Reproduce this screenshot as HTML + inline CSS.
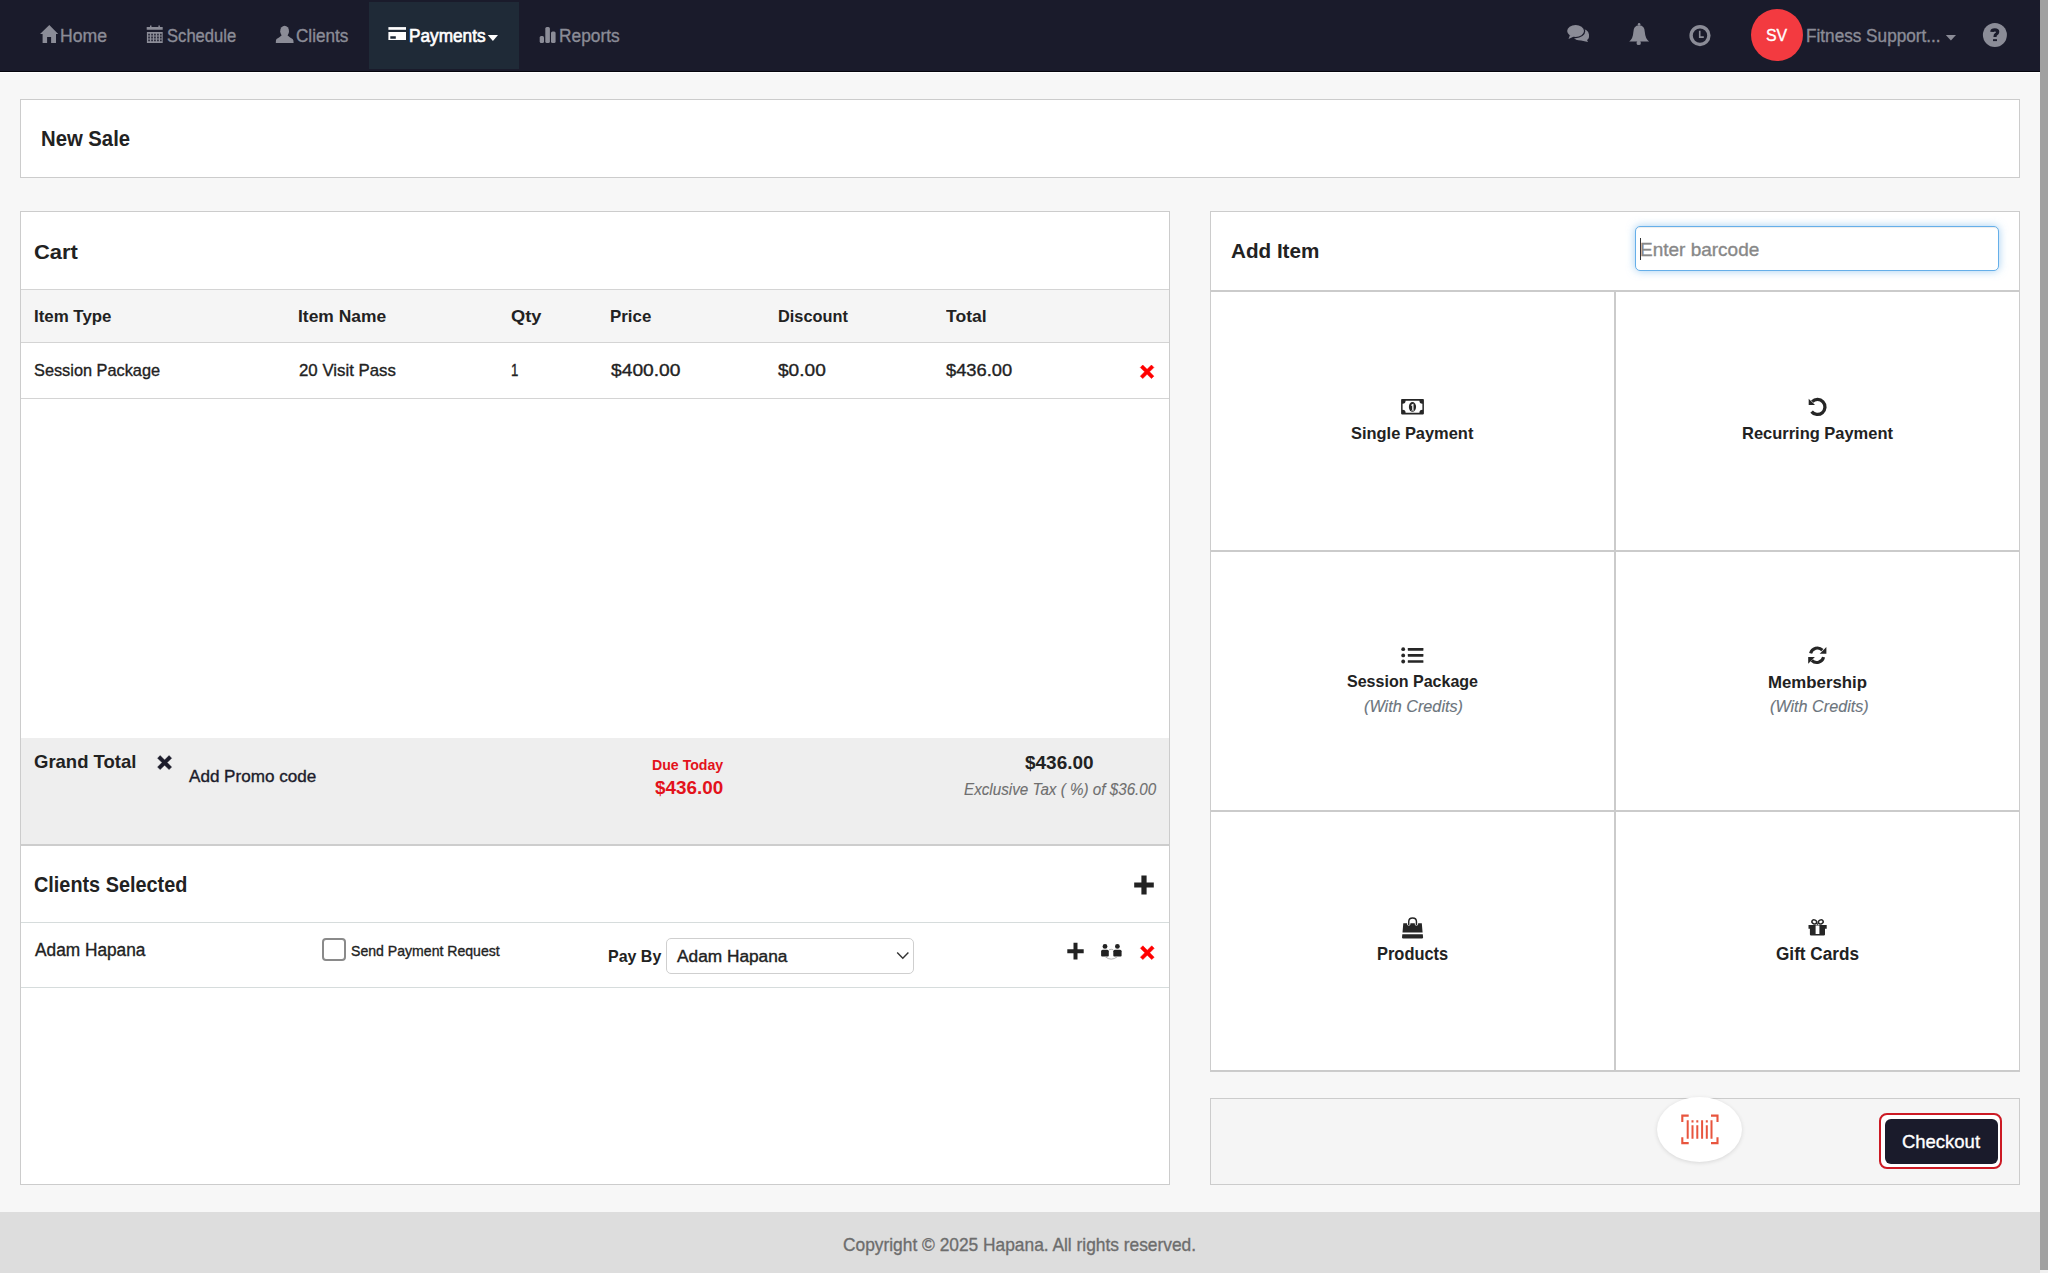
<!DOCTYPE html>
<html><head><meta charset="utf-8"><title>New Sale</title>
<style>
html,body{margin:0;padding:0;}
body{width:2048px;height:1273px;overflow:hidden;position:relative;background:#f7f7f7;font-family:"Liberation Sans",sans-serif;}
.b{position:absolute;}
.i{position:absolute;overflow:visible;}
.t{position:absolute;line-height:1;white-space:nowrap;transform-origin:0 0;}
</style></head><body>
<div class="b" style="left:0px;top:0px;width:2048px;height:71px;background:#1a1b2b;"></div>
<div class="b" style="left:0px;top:71px;width:2048px;height:1px;background:#05050d;"></div>
<div class="b" style="left:0px;top:72px;width:2048px;height:1px;background:#ffffff;"></div>
<div class="b" style="left:369px;top:2px;width:150px;height:67px;background:#1f2a37;"></div>
<svg class="i" style="left:40px;top:25px;" width="19" height="18" viewBox="0 0 19 18"><path fill="#8b8c97" d="M9.3 0 L18.2 9 L16 9 L16 18 L11.1 18 L11.1 12 L7.1 12 L7.1 18 L2.6 18 L2.6 9 L0 9 Z"/></svg>
<svg class="i" style="left:146px;top:25px;" width="17" height="18" viewBox="0 0 17 18"><path fill="#8b8c97" d="M0.7 2 H16.7 V4.8 H0.7 Z M4 0.5 h1.5 v2 h-1.5 Z M12.4 0.5 h1.5 v2 h-1.5 Z"/><path fill="#8b8c97" fill-rule="evenodd" d="M0.9 6.9 H16.7 V18 H0.9 Z M2.3 8.7 h1.5 v1.8 h-1.5 Z M5.3 8.7 h1.5 v1.8 h-1.5 Z M8.2 8.7 h1.5 v1.8 h-1.5 Z M11.2 8.7 h1.5 v1.8 h-1.5 Z M14.1 8.7 h1.5 v1.8 h-1.5 Z M2.3 11.6 h1.5 v1.8 h-1.5 Z M5.3 11.6 h1.5 v1.8 h-1.5 Z M8.2 11.6 h1.5 v1.8 h-1.5 Z M11.2 11.6 h1.5 v1.8 h-1.5 Z M14.1 11.6 h1.5 v1.8 h-1.5 Z M2.3 14.5 h1.5 v1.8 h-1.5 Z M5.3 14.5 h1.5 v1.8 h-1.5 Z M8.2 14.5 h1.5 v1.8 h-1.5 Z M11.2 14.5 h1.5 v1.8 h-1.5 Z M14.1 14.5 h1.5 v1.8 h-1.5 Z"/></svg>
<svg class="i" style="left:275px;top:25px;" width="19" height="19" viewBox="0 0 19 19"><ellipse fill="#8b8c97" cx="9.6" cy="6.3" rx="4.4" ry="5.6"/><path fill="#8b8c97" d="M6.5 10.5 Q4 12.5 1.5 14 Q0.7 14.8 0.8 18 L18.6 18 Q18.7 14.8 17.6 14 Q15 12.5 12.7 10.5 Z"/></svg>
<svg class="i" style="left:388px;top:26px;" width="19" height="15" viewBox="0 0 19 15"><path fill="#fff" d="M0.4 1.1 H18 V3.8 H0.4 Z"/><path fill="#fff" fill-rule="evenodd" d="M0.4 6 H18 V14 H0.4 Z M2.3 10.2 H7.8 V12.8 H2.3 Z"/></svg>
<svg class="i" style="left:487px;top:34px;" width="12" height="8" viewBox="0 0 12 8"><path fill="#fff" d="M0.8 1 L11 1 L5.9 7 Z"/></svg>
<svg class="i" style="left:539px;top:26px;" width="18" height="18" viewBox="0 0 18 18"><rect fill="#8b8c97" x="0.7" y="10" width="4.3" height="7" rx="1.5"/><rect fill="#8b8c97" x="6.3" y="1" width="4.6" height="16" rx="1.5"/><rect fill="#8b8c97" x="12" y="5.6" width="4.6" height="11.4" rx="1.5"/></svg>
<svg class="i" style="left:1566px;top:24px;" width="24" height="19" viewBox="0 0 24 19"><path fill="#8b8c97" d="M11 5 Q22 3.5 23 10.5 Q23.3 15 21 16 L22 18 L15 16.5 Q9 16.5 7.5 13 Z"/><ellipse fill="#1a1b2b" cx="9.5" cy="7" rx="9.8" ry="7.2"/><ellipse fill="#8b8c97" cx="9.6" cy="7.1" rx="8.4" ry="6"/><path fill="#8b8c97" d="M4 11 L2.5 15 L8 12.5 Z"/></svg>
<svg class="i" style="left:1624px;top:18px" width="30" height="30" viewBox="1624 18 30 30"><circle fill="#8b8c97" cx="1639.1" cy="24.3" r="1.3"/><path fill="#8b8c97" d="M1633.3 32.5 Q1633.3 25.4 1639.1 25.2 Q1644.9 25.4 1644.9 32.5 Q1645.2 38.3 1649.1 41.6 L1629.2 41.6 Q1633.1 38.3 1633.3 32.5 Z"/><circle fill="#8b8c97" cx="1638.7" cy="42.9" r="2.2"/></svg>
<svg class="i" style="left:1689px;top:25px;" width="22" height="22" viewBox="0 0 22 22"><circle fill="none" stroke="#8b8c97" stroke-width="3.4" cx="11" cy="10.6" r="8.9"/><path fill="none" stroke="#8b8c97" stroke-width="1.6" d="M10.7 5.8 V12.1 H14.8"/></svg>
<div class="b" style="left:1750.7px;top:9px;width:52px;height:52px;border-radius:50%;background:#f33a40;"></div>
<svg class="i" style="left:1945px;top:34px;" width="12" height="8" viewBox="0 0 12 8"><path fill="#8b8c97" d="M0.8 1 L11 1 L5.9 6.5 Z"/></svg>
<svg class="i" style="left:1978px;top:18px" width="34" height="34" viewBox="1978 18 34 34"><circle fill="#8b8c97" cx="1994.9" cy="35.1" r="12"/><path fill="none" stroke="#1a1b2b" stroke-width="3.2" d="M1991.8 31.8 Q1992 29.9 1994.8 29.9 Q1997.7 29.9 1997.7 32 Q1997.7 33.4 1996 34.3 Q1995 35 1995 37"/><rect fill="#1a1b2b" x="1993" y="39.2" width="4" height="1.9"/></svg>
<div class="b" style="left:20px;top:99px;width:2000px;height:79px;background:#fff;border:1px solid #cccccc;box-sizing:border-box;"></div>
<div class="b" style="left:20px;top:211px;width:1150px;height:974px;background:#fff;border:1px solid #cccccc;box-sizing:border-box;"></div>
<div class="b" style="left:21px;top:289px;width:1148px;height:54px;background:#f5f5f5;"></div>
<div class="b" style="left:21px;top:289px;width:1148px;height:1px;background:#d4d4d4;"></div>
<div class="b" style="left:21px;top:342px;width:1148px;height:1px;background:#d4d4d4;"></div>
<div class="b" style="left:21px;top:398px;width:1148px;height:1px;background:#d4d4d4;"></div>
<div class="b" style="left:21px;top:738px;width:1148px;height:106px;background:#eeeeee;"></div>
<div class="b" style="left:21px;top:844px;width:1148px;height:2px;background:#cdcdcd;"></div>
<div class="b" style="left:21px;top:922px;width:1148px;height:1px;background:#d6dcdc;"></div>
<div class="b" style="left:21px;top:987px;width:1148px;height:1px;background:#d6dcdc;"></div>
<svg class="i" style="left:1138px;top:363px" width="18" height="18" viewBox="1138 363 18 18"><polygon fill="#ff0000" stroke="#ff0000" stroke-width="0.5" stroke-linejoin="round" points="1140.30,367.47 1142.77,365.00 1147.10,369.33 1151.43,365.00 1153.90,367.47 1149.57,371.80 1153.90,376.13 1151.43,378.60 1147.10,374.27 1142.77,378.60 1140.30,376.13 1144.63,371.80"/></svg>
<svg class="i" style="left:155px;top:753px" width="19" height="19" viewBox="155 753 19 19"><polygon fill="#1c1c2b" stroke="#1c1c2b" stroke-width="0.5" stroke-linejoin="round" points="157.60,758.15 160.15,755.60 164.60,760.05 169.05,755.60 171.60,758.15 167.15,762.60 171.60,767.05 169.05,769.60 164.60,765.15 160.15,769.60 157.60,767.05 162.05,762.60"/></svg>
<svg class="i" style="left:1138px;top:943px" width="18" height="18" viewBox="1138 943 18 18"><polygon fill="#ff0000" stroke="#ff0000" stroke-width="0.5" stroke-linejoin="round" points="1140.40,948.27 1142.87,945.80 1147.30,950.23 1151.73,945.80 1154.20,948.27 1149.77,952.70 1154.20,957.13 1151.73,959.60 1147.30,955.17 1142.87,959.60 1140.40,957.13 1144.83,952.70"/></svg>
<svg class="i" style="left:1134px;top:875px;" width="20" height="20" viewBox="0 0 20 20"><path fill="#222" d="M7.4 0.5 H12.6 V7.4 H19.8 V12.6 H12.6 V19.6 H7.4 V12.6 H0.2 V7.4 H7.4 Z"/></svg>
<svg class="i" style="left:1067px;top:942px;" width="17" height="18" viewBox="0 0 17 18"><path fill="#222" d="M6.5 0.7 H10.5 V7.2 H16.7 V11.2 H10.5 V17.4 H6.5 V11.2 H0.3 V7.2 H6.5 Z"/></svg>
<svg class="i" style="left:1096px;top:938px" width="30" height="26" viewBox="1096 938 30 26"><circle fill="#222" cx="1105" cy="946.4" r="2.4"/><circle fill="#222" cx="1117.4" cy="946.4" r="2.4"/><path fill="#222" d="M1101.1 951.2 Q1101.1 949.7 1102.6 949.7 H1107.3 Q1108.8 949.7 1108.8 951.2 V955.6 Q1108.8 956.6 1107.8 956.6 H1102.1 Q1101.1 956.6 1101.1 955.6 Z"/><path fill="#222" d="M1113.3 951.2 Q1113.3 949.7 1114.8 949.7 H1120.1 Q1121.6 949.7 1121.6 951.2 V955.6 Q1121.6 956.6 1120.6 956.6 H1114.3 Q1113.3 956.6 1113.3 955.6 Z"/><path fill="none" stroke="#aaa" stroke-width="0.9" d="M1105.3 956.8 Q1111.2 961.5 1117.2 956.8 M1109 949.8 Q1111.2 948.7 1113.3 949.8"/></svg>
<div class="b" style="left:321.5px;top:937.5px;width:24px;height:23px;border:2px solid #8a8a8a;border-radius:4px;box-sizing:border-box;background:#fff;"></div>
<div class="b" style="left:665.5px;top:937.5px;width:248px;height:36px;border:1px solid #cfcfcf;border-radius:5px;box-sizing:border-box;background:#fff;"></div>
<svg class="i" style="left:896px;top:951px;" width="14" height="9" viewBox="0 0 14 9"><path fill="none" stroke="#333" stroke-width="1.4" d="M1.2 1.5 L6.8 7.3 L12.4 1.5"/></svg>
<div class="b" style="left:1210px;top:211px;width:810px;height:861px;background:#fff;border:1px solid #cccccc;box-sizing:border-box;"></div>
<div class="b" style="left:1211px;top:290px;width:808px;height:2px;background:#cbcbcb;"></div>
<div class="b" style="left:1211px;top:550px;width:808px;height:2px;background:#cbcbcb;"></div>
<div class="b" style="left:1211px;top:810px;width:808px;height:2px;background:#cbcbcb;"></div>
<div class="b" style="left:1614px;top:291px;width:2px;height:780px;background:#cbcbcb;"></div>
<div class="b" style="left:1211px;top:1070px;width:808px;height:1px;background:#cbcbcb;"></div>
<div class="b" style="left:1635px;top:226px;width:364px;height:45px;border:1px solid #66afe9;border-radius:5px;box-sizing:border-box;background:#fff;box-shadow:inset 0 1px 1px rgba(0,0,0,.075),0 0 8px rgba(102,175,233,.6);"></div>
<div class="b" style="left:1640px;top:238px;width:1px;height:22px;background:#333;"></div>
<svg class="i" style="left:1396px;top:394px" width="34" height="26" viewBox="1396 394 34 26"><path fill="#262626" fill-rule="evenodd" d="M1401.9 399.1 H1423.1 Q1423.9 399.1 1423.9 399.9 V413.6 Q1423.9 414.4 1423.1 414.4 H1401.9 Q1401.1 414.4 1401.1 413.6 V399.9 Q1401.1 399.1 1401.9 399.1 Z M1405.6 400.7 H1419.4 A3 3 0 0 0 1422.4 403.7 V409.8 A3 3 0 0 0 1419.4 412.8 H1405.6 A3 3 0 0 0 1402.6 409.8 V403.7 A3 3 0 0 0 1405.6 400.7 Z"/><ellipse fill="#262626" cx="1412.45" cy="406.95" rx="3.6" ry="4.85"/><path fill="#fff" d="M1411.2 404.8 L1413.1 403.7 H1413.5 V409.9 H1414.4 V410.6 H1411.3 V409.9 H1412.2 V405.4 Q1411.7 405.8 1411.2 405.8 Z"/></svg>
<svg class="i" style="left:1802px;top:392px" width="30" height="30" viewBox="1802 392 30 30"><path fill="none" stroke="#262626" stroke-width="3.3" d="M1812.2 401.6 A7.5 7.5 0 1 1 1811.6 411.6"/><path fill="#262626" d="M1808.7 398.7 L1808.7 405 L1815 405 Z"/></svg>
<svg class="i" style="left:1401px;top:647px;" width="23" height="17" viewBox="0 0 23 17"><circle fill="#262626" cx="2.2" cy="2.2" r="1.9"/><circle fill="#262626" cx="2.2" cy="8.4" r="1.9"/><circle fill="#262626" cx="2.2" cy="14.5" r="1.9"/><rect fill="#262626" x="6.8" y="1.1" width="15.6" height="2.6" rx="0.4"/><rect fill="#262626" x="6.8" y="7.1" width="15.6" height="2.6" rx="0.4"/><rect fill="#262626" x="6.8" y="13.2" width="15.6" height="2.6" rx="0.4"/></svg>
<svg class="i" style="left:1802px;top:640px" width="30" height="30" viewBox="1802 640 30 30"><path fill="none" stroke="#262626" stroke-width="3.1" d="M1810.6 653.4 A7 7 0 0 1 1822.4 650.2"/><path fill="#262626" d="M1826.4 647 V653.7 H1819.7 Z"/><path fill="none" stroke="#262626" stroke-width="3.1" d="M1823.6 657.1 A7 7 0 0 1 1811.8 660.3"/><path fill="#262626" d="M1808.2 663.8 V657 H1814.9 Z"/></svg>
<svg class="i" style="left:1396px;top:910px" width="34" height="34" viewBox="1396 910 34 34"><path fill="none" stroke="#262626" stroke-width="1.45" d="M1408.75 925.2 V921.6 Q1408.75 917.95 1412.6 917.95 Q1416.45 917.95 1416.45 921.6 V925.2"/><path fill="#262626" d="M1403.3 923.3 H1407.1 V924.4 Q1408.75 927.3 1410.4 924.4 V923.3 H1414.8 V924.4 Q1416.45 927.3 1418.1 924.4 V923.3 H1421.8 L1422.6 932.4 H1402.5 Z"/><path fill="#262626" d="M1402.3 934.2 H1422.8 L1423.1 937.6 Q1423.1 938.4 1422.3 938.4 H1402.8 Q1402 938.4 1402 937.6 Z"/></svg>
<svg class="i" style="left:1804px;top:914px" width="28" height="26" viewBox="1804 914 28 26"><ellipse fill="none" stroke="#262626" stroke-width="1.5" cx="1814.3" cy="921.9" rx="2.45" ry="2.0" transform="rotate(25 1814.3 921.9)"/><ellipse fill="none" stroke="#262626" stroke-width="1.5" cx="1820.8" cy="921.9" rx="2.45" ry="2.0" transform="rotate(-25 1820.8 921.9)"/><path fill="#262626" d="M1816.3 923.2 L1817.55 925.2 L1818.8 923.2 Z"/><path fill="#262626" fill-rule="evenodd" d="M1808.5 925 H1826.7 V928.7 H1825 V934.6 Q1825 935.4 1824.2 935.4 H1810.7 Q1809.9 935.4 1809.9 934.6 V928.7 H1808.5 Z M1815.6 925.5 H1819.4 V934 H1815.6 Z"/></svg>
<div class="b" style="left:1210px;top:1098px;width:810px;height:87px;background:#f5f5f5;border:1px solid #cccccc;box-sizing:border-box;"></div>
<div class="b" style="left:1657px;top:1097px;width:85px;height:65px;border-radius:50%;background:#fff;box-shadow:0 1px 4px rgba(0,0,0,.12);"></div>
<svg class="i" style="left:1676px;top:1108px" width="48" height="42" viewBox="1676 1108 48 42"><path fill="none" stroke="#e8553e" stroke-width="2.1" d="M1688.7 1115.6 H1682.3 V1121.9 M1711 1115.6 H1717.5 V1121.9 M1688.7 1143.1 H1682.3 V1137.2 M1711 1143.1 H1717.5 V1137.2"/><path fill="#e8553e" d="M1686.7 1120.2 h2 v18.5 h-2 Z M1691.5 1125.2 h2 v13.5 h-2 Z M1691.5 1120.2 h2 v2.3 h-2 Z M1696.3 1125.2 h2 v13.5 h-2 Z M1696.3 1120.2 h2 v2.3 h-2 Z M1701.1 1120.2 h2 v18.5 h-2 Z M1705.8 1125.2 h2 v13.5 h-2 Z M1705.8 1120.2 h2 v2.3 h-2 Z M1710.5 1120.2 h2 v18.5 h-2 Z"/></svg>
<div class="b" style="left:1879.3px;top:1113.2px;width:123.2px;height:55.8px;border:2.6px solid #cc1a24;border-radius:8px;box-sizing:border-box;background:#fff;"></div>
<div class="b" style="left:1885px;top:1119px;width:112.5px;height:45px;border-radius:6px;background:#1a1b2b;"></div>
<div class="b" style="left:0px;top:1212px;width:2048px;height:61px;background:#dddddd;"></div>
<div class="b" style="left:2040px;top:0px;width:8px;height:1270px;background:#a1a1a1;"></div>
<div class="b" style="left:2040px;top:1270px;width:8px;height:3px;background:#f0f0f0;"></div>
<span class="t" style="left:59.59px;top:27.16px;font-size:18.0px;color:#8b8c97;-webkit-text-stroke:0.35px #8b8c97;transform:scaleX(0.9799);">Home</span>
<span class="t" style="left:167.34px;top:27.16px;font-size:18.0px;color:#8b8c97;-webkit-text-stroke:0.35px #8b8c97;transform:scaleX(0.9228);">Schedule</span>
<span class="t" style="left:296.14px;top:27.16px;font-size:18.0px;color:#8b8c97;-webkit-text-stroke:0.35px #8b8c97;transform:scaleX(0.9519);">Clients</span>
<span class="t" style="left:408.62px;top:26.96px;font-size:18.0px;color:#ffffff;-webkit-text-stroke:0.65px #ffffff;transform:scaleX(0.9570);">Payments</span>
<span class="t" style="left:558.61px;top:26.96px;font-size:18.0px;color:#8b8c97;-webkit-text-stroke:0.35px #8b8c97;transform:scaleX(0.9632);">Reports</span>
<span class="t" style="left:1765.76px;top:27.95px;font-size:16.0px;color:#ffffff;-webkit-text-stroke:0.35px #ffffff;transform:scaleX(0.9927);">SV</span>
<span class="t" style="left:1805.63px;top:27.76px;font-size:17.5px;color:#8b8c97;-webkit-text-stroke:0.35px #8b8c97;transform:scaleX(0.9813);">Fitness Support...</span>
<span class="t" style="left:40.78px;top:128.69px;font-size:21.5px;color:#222222;font-weight:700;transform:scaleX(0.9432);">New Sale</span>
<span class="t" style="left:33.92px;top:241.42px;font-size:21.0px;color:#222222;font-weight:700;transform:scaleX(1.0436);">Cart</span>
<span class="t" style="left:33.99px;top:307.91px;font-size:17.0px;color:#222222;font-weight:700;transform:scaleX(0.9918);">Item Type</span>
<span class="t" style="left:298.35px;top:307.91px;font-size:17.0px;color:#222222;font-weight:700;transform:scaleX(1.0247);">Item Name</span>
<span class="t" style="left:511.47px;top:307.91px;font-size:17.0px;color:#222222;font-weight:700;transform:scaleX(1.0713);">Qty</span>
<span class="t" style="left:610.19px;top:307.91px;font-size:17.0px;color:#222222;font-weight:700;transform:scaleX(0.9920);">Price</span>
<span class="t" style="left:777.62px;top:307.91px;font-size:17.0px;color:#222222;font-weight:700;transform:scaleX(0.9602);">Discount</span>
<span class="t" style="left:945.52px;top:307.91px;font-size:17.0px;color:#222222;font-weight:700;transform:scaleX(1.0336);">Total</span>
<span class="t" style="left:34.35px;top:362.21px;font-size:17.0px;color:#222222;-webkit-text-stroke:0.35px #222222;transform:scaleX(0.9595);">Session Package</span>
<span class="t" style="left:298.56px;top:362.21px;font-size:17.0px;color:#222222;-webkit-text-stroke:0.35px #222222;transform:scaleX(0.9897);">20 Visit Pass</span>
<span class="t" style="left:511.28px;top:362.21px;font-size:17.0px;color:#222222;-webkit-text-stroke:0.35px #222222;transform:scaleX(0.7754);">1</span>
<span class="t" style="left:611.01px;top:362.21px;font-size:17.0px;color:#222222;-webkit-text-stroke:0.35px #222222;transform:scaleX(1.1308);">$400.00</span>
<span class="t" style="left:778.41px;top:362.21px;font-size:17.0px;color:#222222;-webkit-text-stroke:0.35px #222222;transform:scaleX(1.1232);">$0.00</span>
<span class="t" style="left:945.52px;top:362.21px;font-size:17.0px;color:#222222;-webkit-text-stroke:0.35px #222222;transform:scaleX(1.0764);">$436.00</span>
<span class="t" style="left:34.46px;top:751.51px;font-size:19.0px;color:#222222;font-weight:700;transform:scaleX(0.9733);">Grand Total</span>
<span class="t" style="left:188.75px;top:769.25px;font-size:16.0px;color:#1c1c2b;-webkit-text-stroke:0.35px #1c1c2b;transform:scaleX(1.0670);">Add Promo code</span>
<span class="t" style="left:652.35px;top:757.00px;font-size:15.0px;color:#e3121b;font-weight:700;transform:scaleX(0.9422);">Due Today</span>
<span class="t" style="left:654.81px;top:779.98px;font-size:17.5px;color:#e3121b;font-weight:700;transform:scaleX(1.0777);">$436.00</span>
<span class="t" style="left:1025.31px;top:754.36px;font-size:18.0px;color:#222222;font-weight:700;transform:scaleX(1.0539);">$436.00</span>
<span class="t" style="left:963.84px;top:781.13px;font-size:16.5px;color:#6f6f6f;-webkit-text-stroke:0.12px #6f6f6f;font-style:italic;transform:scaleX(0.9221);">Exclusive Tax ( %) of $36.00</span>
<span class="t" style="left:34.01px;top:874.56px;font-size:21.5px;color:#222222;font-weight:700;transform:scaleX(0.9230);">Clients Selected</span>
<span class="t" style="left:35.30px;top:941.26px;font-size:18.0px;color:#222222;-webkit-text-stroke:0.35px #222222;transform:scaleX(0.9597);">Adam Hapana</span>
<span class="t" style="left:351.44px;top:942.90px;font-size:15.0px;color:#222222;-webkit-text-stroke:0.35px #222222;transform:scaleX(0.9388);">Send Payment Request</span>
<span class="t" style="left:608.04px;top:948.01px;font-size:17.0px;color:#222222;font-weight:700;transform:scaleX(0.9399);">Pay By</span>
<span class="t" style="left:676.70px;top:948.85px;font-size:16.0px;color:#222222;-webkit-text-stroke:0.35px #222222;transform:scaleX(1.0796);">Adam Hapana</span>
<span class="t" style="left:1231.19px;top:239.92px;font-size:21.0px;color:#222222;font-weight:700;transform:scaleX(0.9833);">Add Item</span>
<span class="t" style="left:1639.98px;top:240.41px;font-size:19.0px;color:#888888;-webkit-text-stroke:0.35px #888888;">Enter barcode</span>
<span class="t" style="left:1351.27px;top:424.73px;font-size:16.5px;color:#222222;font-weight:700;transform:scaleX(0.9960);">Single Payment</span>
<span class="t" style="left:1741.71px;top:424.91px;font-size:17.0px;color:#222222;font-weight:700;transform:scaleX(0.9683);">Recurring Payment</span>
<span class="t" style="left:1347.08px;top:673.03px;font-size:17.0px;color:#222222;font-weight:700;transform:scaleX(0.9433);">Session Package</span>
<span class="t" style="left:1364.25px;top:699.15px;font-size:16.0px;color:#6c757d;-webkit-text-stroke:0.12px #6c757d;font-style:italic;transform:scaleX(1.0140);">(With Credits)</span>
<span class="t" style="left:1767.99px;top:673.81px;font-size:17.0px;color:#222222;font-weight:700;transform:scaleX(0.9886);">Membership</span>
<span class="t" style="left:1769.55px;top:699.15px;font-size:16.0px;color:#6c757d;-webkit-text-stroke:0.12px #6c757d;font-style:italic;transform:scaleX(1.0109);">(With Credits)</span>
<span class="t" style="left:1376.91px;top:945.94px;font-size:17.5px;color:#222222;font-weight:700;transform:scaleX(0.9385);">Products</span>
<span class="t" style="left:1776.11px;top:945.94px;font-size:17.5px;color:#222222;font-weight:700;transform:scaleX(0.9812);">Gift Cards</span>
<span class="t" style="left:1901.88px;top:1132.74px;font-size:18.5px;color:#ffffff;-webkit-text-stroke:0.35px #ffffff;">Checkout</span>
<span class="t" style="left:843.03px;top:1235.01px;font-size:19.0px;color:#6d6d6d;-webkit-text-stroke:0.35px #6d6d6d;transform:scaleX(0.9127);">Copyright © 2025 Hapana. All rights reserved.</span>
</body></html>
